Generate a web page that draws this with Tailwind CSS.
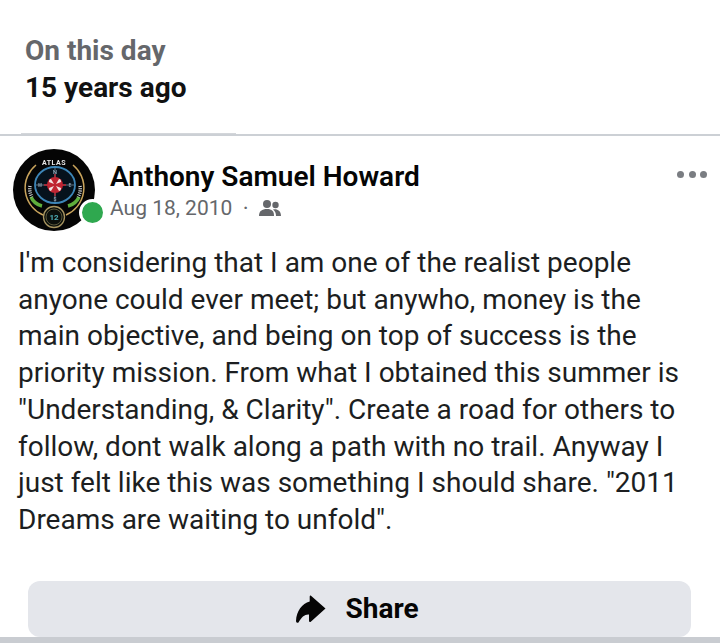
<!DOCTYPE html>
<html lang="en">
<head>
  <meta charset="UTF-8">
  <meta name="viewport" content="width=device-width, initial-scale=1.0">
  <title>On this day</title>
  <script src="https://cdn.jsdelivr.net/npm/@tailwindcss/browser@4"></script>
</head>
<body class="bg-white font-['Roboto',sans-serif] w-[720px] h-[643px] overflow-hidden flex flex-col">
  <!-- Header -->
  <header class="h-[133px] pt-[33px] pl-[25px] shrink-0">
    <p class="text-[28px] leading-[36px] font-bold text-[#65676b]">On this day</p>
    <p class="text-[28px] leading-[38px] font-bold text-[#111]">15 years ago</p>
  </header>
  <div class="h-[3px] border-t border-white bg-[#ccd0d5] shrink-0 relative">
    <div class="absolute left-[21px] top-[-1px] w-[215px] h-[1px] bg-[#d3d6da]"></div>
  </div>

  <!-- Post -->
  <article class="flex-1 flex flex-col min-h-0">
    <div class="flex pl-[13px] pr-[13px] pt-[13px]">
      <div class="relative w-[82px] h-[82px] shrink-0">
        <svg class="w-[82px] h-[82px] blur-[0.4px]" viewBox="0 0 82 82">
          <circle cx="41" cy="41" r="41" fill="#050505"/>
          <!-- gold ring, open for the ATLAS lettering -->
          <path d="M23 16A29.500 29.500 0 0 0 30 66M60 16A29.500 29.500 0 0 1 53 66" fill="none" stroke="#c9a45c" stroke-width="1.500"/>
          <ellipse cx="42" cy="36" rx="20" ry="18" fill="#06121c" stroke="#3d86b8" stroke-width="1.800"/>
          <path d="M42 19V53M23 36H61" stroke="#7c8fa0" stroke-width="0.800"/>
          <path d="M18 48Q21 55 29 57" fill="none" stroke="#5fae3c" stroke-width="3.500"/>
          <path d="M66 48Q63 55 55 57" fill="none" stroke="#5fae3c" stroke-width="3.500"/>
          <path d="M17 37Q16 43 19 48M67 37Q68 43 65 48" fill="none" stroke="#d8dde0" stroke-width="3.500" stroke-dasharray="1 1.200"/>
          <circle cx="42" cy="36" r="8" fill="#c02532"/>
          <path d="M41 35L36 33Q36 30 38 30ZM43 35L48 33Q48 30 46 30ZM41 37L36 39Q36 42 38 42ZM43 37L48 39Q48 42 46 42Z" fill="#f4e4e4"/>
          <path d="M42 25V47M31 36H53" stroke="#c02532" stroke-width="1.300"/>
          <text x="41" y="16" text-anchor="middle" font-size="7" font-weight="700" fill="#e8e8e8" font-family="Roboto, sans-serif" letter-spacing="0.500">ATLAS</text>
          <text x="42" y="25" text-anchor="middle" font-size="6" fill="#9fb6c6" font-family="Roboto, sans-serif">N</text>
          <text x="57" y="38" text-anchor="middle" font-size="5" fill="#9fb6c6" font-family="Roboto, sans-serif">E</text>
          <text x="42" y="52" text-anchor="middle" font-size="5" fill="#9fb6c6" font-family="Roboto, sans-serif">S</text>
          <text x="27" y="38" text-anchor="middle" font-size="5" fill="#9fb6c6" font-family="Roboto, sans-serif">W</text>
          <circle cx="41" cy="68" r="10.500" fill="#0b0f0b" stroke="#a89560" stroke-width="1.300"/>
          <circle cx="41" cy="68" r="8" fill="none" stroke="#6f6a48" stroke-width="0.800"/>
          <text x="41" y="71" text-anchor="middle" font-size="8" font-weight="700" fill="#4fb0b8" font-family="Roboto, sans-serif">12</text>
        </svg>
        <span class="absolute left-[66px] top-[50px] w-[27px] h-[27px] rounded-full bg-[#2fa84f] border-[3px] border-white box-border"></span>
      </div>
      <div class="ml-[15px] flex-1 min-w-0">
        <p class="text-[28px] leading-[36px] font-semibold text-[#050505] mt-[10px]">Anthony Samuel Howard</p>
        <div class="flex items-center text-[#65676b] text-[21px] leading-[28px] mt-[-1px]">
          <span>Aug 18, 2010</span>
          <span class="ml-[11px] text-[16px] font-bold">·</span>
          <svg class="ml-[11px] w-[22px] h-[18px]" viewBox="0 0 22 18" fill="#65676b">
            <circle cx="8" cy="5" r="4"/>
            <path d="M0 17C0 12 3 10 8 10S15 12 15 17Z"/>
            <circle cx="16.500" cy="6" r="3.200"/>
            <path d="M14 10.400C18 9.500 22 11.500 22 17H17C17 14 16 12 14 10.400Z"/>
          </svg>
        </div>
      </div>
      <div class="flex gap-[4.500px] mt-[22px] h-[7px] shrink-0">
        <span class="w-[7px] h-[7px] rounded-full bg-[#7a7d82]"></span>
        <span class="w-[7px] h-[7px] rounded-full bg-[#7a7d82]"></span>
        <span class="w-[7px] h-[7px] rounded-full bg-[#7a7d82]"></span>
      </div>
    </div>

    <p class="pl-[18px] pr-[20px] mt-[14px] text-[28px] leading-[36.7px] text-[#1c1e21] whitespace-nowrap">I'm considering that I am one of the realist people<br>anyone could ever meet; but anywho, money is the<br>main objective, and being on top of success is the<br>priority mission. From what I obtained this summer is<br>"Understanding, &amp; Clarity". Create a road for others to<br>follow, dont walk along a path with no trail. Anyway I<br>just felt like this was something I should share. "2011<br>Dreams are waiting to unfold".</p>

    <div class="mt-auto pl-[28px] pr-[29px]">
      <button class="w-full h-[56px] pr-[4px] bg-[#e4e6eb] rounded-[12px] flex items-center justify-center">
        <svg class="w-[30px] h-[28px] mr-[19px]" viewBox="0 0 30 28" fill="#050505">
          <path d="M14.700 0.500L29.500 13.500L14.500 27Q13 27.500 13 25.500V19.500C9 19 5.500 22 2.500 27.500Q0 28.500 0 26C0.500 16 6 8.500 13.700 6.500V1.500Q14 0 14.700 0.500Z"/>
        </svg>
        <span class="text-[28px] leading-[34px] font-bold text-[#050505]">Share</span>
      </button>
    </div>
  </article>
  <div class="h-[6px] bg-[#c9ccd1] shrink-0"></div>
</body>
</html>
